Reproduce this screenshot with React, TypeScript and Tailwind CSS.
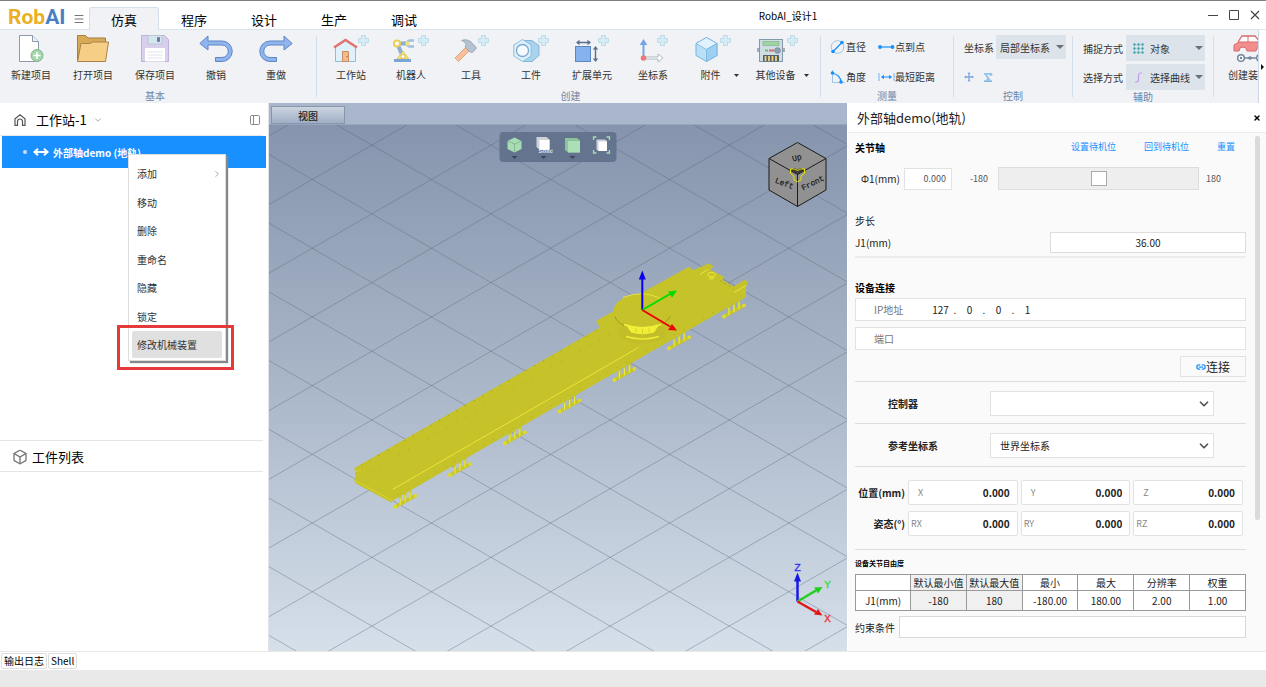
import { useState, type ReactNode } from 'react';
import { Box, ChevronDown, ChevronRight, Link2, Menu, PanelLeft, X } from 'lucide-react';

const tabs = ['仿真', '程序', '设计', '生产', '调试'];

const menuItems = ['添加', '移动', '删除', '重命名', '隐藏', '锁定', '修改机械装置'];

/* ---------- ribbon icons ---------- */

function Plus({ x }: { x: number }) {
  return (
    <path
      transform={`translate(${x} 0)`}
      d="M3.5 .5h4v3h3v4h-3v3h-4v-3h-3v-4h3z"
      fill="#d3ecf6"
      stroke="#b4d5e6"
      strokeWidth=".8"
    />
  );
}

function NewIcon() {
  return (
    <svg viewBox="0 0 26 28" className="w-[26px] h-7">
      <path d="M1.5 .5h13l6 6v20h-19z" fill="#fff" stroke="#8d9bab" />
      <path d="M14.5 .5v6h6" fill="#eef2f7" stroke="#8d9bab" />
      <circle cx="19" cy="20.5" r="6" fill="#a5d6ab" stroke="#7fb98a" />
      <path d="M19 17v7M15.5 20.5h7" stroke="#fff" strokeWidth="1.6" />
    </svg>
  );
}

function OpenIcon() {
  return (
    <svg viewBox="0 0 34 28" className="w-[34px] h-7">
      <path d="M1.5 26.5v-26h8l2.5 2.5h17.5v8" fill="#d8a957" stroke="#a47d3f" />
      <path d="M1.500 26.5l3.500-18h9l2.500-1.500h16l-3 19.500z" fill="#f6ce85" stroke="#a8824a" />
    </svg>
  );
}

function SaveIcon() {
  return (
    <svg viewBox="0 0 28 28" className="w-7 h-7">
      <path d="M.5 .5h23l4 4v22h-27z" fill="#d9cfec" stroke="#bfb2da" />
      <path d="M7 .5h14v8.5h-14z" fill="#d5e5ee" stroke="#b3c4d4" strokeWidth=".8" />
      <rect x="16" y="2" width="3" height="5" rx="1" fill="#6c7f9a" />
      <path d="M4 13h20v13.5h-20z" fill="#fff" />
      <path d="M6.5 17h15M6.5 20h15M6.5 23h15" stroke="#dfe3ec" />
    </svg>
  );
}

function UndoIcon({ flip }: { flip?: boolean }) {
  return (
    <svg viewBox="0 0 34 28" className={`w-[34px] h-7 ${flip ? '-scale-x-100' : ''}`}>
      <path
        d="M.8 8.500L9 1v5h14a10 10 0 0 1 0 20.5h-6.5v-4h6.5a6 6 0 0 0 0-12.5h-14v5z"
        fill="#90b5ee"
        stroke="#5f86c4"
      />
    </svg>
  );
}

function StationIcon() {
  return (
    <svg viewBox="0 0 36 28" className="w-9 h-7">
      <path d="M2.5 12L12.5 5l10 7v14.5h-20z" fill="#dff2fb" stroke="#8fbcd8" />
      <path d="M1 12.5L12.5 5 24 12.5" fill="none" stroke="#e0736f" strokeWidth="2.5" />
      <path d="M9.5 16.5h6v10h-6z" fill="#f6ba8c" stroke="#c98c5e" />
      <circle cx="14" cy="21.5" r=".7" fill="#9b6135" />
      <Plus x={25} />
    </svg>
  );
}

function RobotIcon() {
  return (
    <svg viewBox="0 0 36 28" className="w-9 h-7">
      <path d="M4 8l6 14" stroke="#8aaed4" strokeWidth="4" />
      <path d="M5 8.5h10" stroke="#8aaed4" strokeWidth="4" />
      <path d="M21 5.5h-4a3 3 0 0 0 0 6h4" fill="none" stroke="#9cc0e3" strokeWidth="2.5" />
      <circle cx="4" cy="8.5" r="3" fill="#fff" stroke="#e8cf57" strokeWidth="2" />
      <circle cx="14.5" cy="8.5" r="2.2" fill="#f4df73" />
      <path d="M4 24l6-8 6 8z" fill="#f7e37c" stroke="#d9c050" strokeWidth=".8" />
      <circle cx="10" cy="21.5" r="2" fill="#fff" stroke="#d9c050" />
      <rect x="1" y="24" width="17" height="3" fill="#7ba5d3" />
      <Plus x={25} />
    </svg>
  );
}

function HammerIcon() {
  return (
    <svg viewBox="0 0 36 28" className="w-9 h-7">
      <path d="M12.5 12.500l3.500 3.500-10.500 10.500-3.500-3.500z" fill="#f8c09a" stroke="#d99a71" strokeWidth=".8" />
      <path d="M8.5 5.500c4-1.500 8-.5 10.500 2.500l2 2 2.500 3-4 4.500-2.500-.5-5-5 1-2c0-2-2-3.500-4.500-4.500z" fill="#b5c3d0" stroke="#8f9fae" strokeWidth=".8" />
      <Plus x={25} />
    </svg>
  );
}

function NutIcon() {
  return (
    <svg viewBox="0 0 36 28" className="w-9 h-7">
      <path d="M10 5.5h9l7 5v10l-7 6h-9z" fill="#a9d2ee" stroke="#85b7d9" />
      <path d="M9.5 4.5L18 10v11l-8.5 5.500L.8 21V10z" fill="#dcf0fb" stroke="#8fc0de" />
      <circle cx="9.5" cy="15.5" r="6" fill="#f4fafd" stroke="#7ba9d0" strokeWidth="1.3" />
      <Plus x={25} />
    </svg>
  );
}

function ExtendIcon() {
  return (
    <svg viewBox="0 0 36 28" className="w-9 h-7">
      <rect x="1.5" y="11.5" width="15" height="15" fill="#86b2ef" stroke="#5d87c0" />
      <path d="M4 7.5h11M21.5 13v12" stroke="#5a6f8f" strokeWidth="1.4" />
      <path d="M5.5 4.8L2 7.500l3.500 2.700zM13.5 4.800L17 7.500l-3.500 2.700zM18.8 14.500L21.5 11l2.700 3.500zM18.8 23.500l2.700 3.500 2.700-3.500z" fill="#5a6f8f" />
      <Plus x={24} />
    </svg>
  );
}

function AxesIcon() {
  return (
    <svg viewBox="0 0 36 28" className="w-9 h-7">
      <path d="M7.5 9h2v13h-2zM8.5 4l3.8 6H4.700z" fill="#76a4e4" />
      <path d="M9 22h14v-3l5 4-5 4v-3H9z" fill="#fff" stroke="#9aa9b9" strokeWidth=".8" />
      <circle cx="8.5" cy="23" r="2.8" fill="#ef7676" />
      <Plus x={22} />
    </svg>
  );
}

function AttachIcon() {
  return (
    <svg viewBox="0 0 36 28" className="w-9 h-7">
      <path d="M11.5 2.500L22 8.500v12l-10.500 6-10.500-6v-12z" fill="#b9e0f8" stroke="#78b3da" />
      <path d="M11.5 2.500L22 8.500l-10.500 6L1 8.500z" fill="#dff2fd" stroke="#78b3da" strokeWidth=".8" />
      <path d="M11.5 14.500L22 8.500v12l-10.500 6z" fill="#9bd0f4" stroke="#78b3da" strokeWidth=".8" />
      <Plus x={25} />
    </svg>
  );
}

function DeviceIcon() {
  return (
    <svg viewBox="0 0 42 28" className="w-[42px] h-7">
      <rect x="2.5" y="4.5" width="23" height="22" fill="#cfdde5" stroke="#8398a8" />
      <path d="M1 13v4M27 13v4" stroke="#8398a8" strokeWidth="1.5" />
      <rect x="6" y="6.5" width="16" height="4" fill="#9fd3a4" stroke="#79b182" strokeWidth=".6" />
      <path d="M8 15.5h3" stroke="#6fbf78" strokeWidth="2" />
      <path d="M12 15.5h5" stroke="#dd6a67" strokeWidth="2" />
      <circle cx="20.5" cy="15.5" r="2.8" fill="#8d9fb3" stroke="#6f8397" strokeWidth=".8" />
      <rect x="6" y="20" width="16" height="6.5" fill="#55616f" />
      <path d="M8.5 21v5M12 21v5M15.5 21v5M19 21v5" stroke="#f0d47c" strokeWidth="1.8" />
      <Plus x={30} />
    </svg>
  );
}

function CarIcon() {
  return (
    <svg viewBox="0 0 36 28" className="w-9 h-7 shrink-0">
      <path d="M5 7L9 1h13l5 6" fill="#fff" stroke="#d76a6c" strokeWidth="1.3" />
      <path d="M15 1v7" stroke="#d76a6c" />
      <path d="M1 16V10l5-3h21l7 3v6h-3a4 4 0 0 0-8 0h-9a4 4 0 0 0-8 0z" fill="#f48e8e" stroke="#d76a6c" />
      <path d="M7 23h19" stroke="#73859a" strokeWidth="1.5" />
      <circle cx="8" cy="23" r="3.3" fill="#fff" stroke="#73859a" strokeWidth="1.5" />
      <circle cx="8" cy="23" r="1.2" fill="#73859a" />
      <circle cx="17" cy="23" r="1.8" fill="#73859a" />
      <circle cx="27" cy="23" r="3.3" fill="#fff" stroke="#73859a" strokeWidth="1.5" />
    </svg>
  );
}

function DiameterIcon() {
  return (
    <svg viewBox="0 0 16 14" className="w-4 h-3.5">
      <circle cx="7.5" cy="7" r="6.3" fill="none" stroke="#9fc3e6" />
      <path d="M3 11.5L12 2.5" stroke="#1890ff" strokeWidth="1.3" />
      <circle cx="3" cy="11.5" r="1.8" fill="#1890ff" />
      <circle cx="12" cy="2.5" r="1.8" fill="#1890ff" />
    </svg>
  );
}

function AngleIcon() {
  return (
    <svg viewBox="0 0 16 14" className="w-4 h-3.5">
      <path d="M2.5 0v12.500H15" fill="none" stroke="#9fc3e6" />
      <path d="M3 3.500a9 9 0 0 1 8 8.500" fill="none" stroke="#1890ff" strokeWidth="1.2" />
      <circle cx="2.5" cy="3" r="1.8" fill="#1890ff" />
      <circle cx="11" cy="12" r="1.8" fill="#1890ff" />
    </svg>
  );
}

function PointIcon() {
  return (
    <svg viewBox="0 0 17 10" className="w-[17px] h-2.5">
      <path d="M2 5h13" stroke="#1890ff" strokeWidth="1.2" />
      <circle cx="2" cy="5" r="1.9" fill="#1890ff" />
      <circle cx="14.5" cy="5" r="1.9" fill="#1890ff" />
    </svg>
  );
}

function DistanceIcon() {
  return (
    <svg viewBox="0 0 17 10" className="w-[17px] h-2.5">
      <path d="M1 1v8M16 1v8" stroke="#6fb2f5" />
      <path d="M4 5h9" stroke="#1890ff" />
      <path d="M5.5 3.5L3.5 5l2 1.500zM11.5 3.500l2 1.500-2 1.500z" fill="#1890ff" stroke="#1890ff" />
    </svg>
  );
}

/* ---------- ribbon parts ---------- */

function ToolButton({ icon, label, wide }: { icon: ReactNode; label: string; wide?: boolean }) {
  return (
    <button className={`flex flex-col items-center ${wide ? 'w-[62px]' : 'w-[60px]'}`}>
      {icon}
      <span className="mt-1 leading-4">{label}</span>
    </button>
  );
}

function DropButton({ icon, label, wide }: { icon: ReactNode; label: string; wide?: boolean }) {
  return (
    <button className={`flex flex-col items-center ${wide ? 'w-[70px]' : 'w-[60px]'}`}>
      {icon}
      <span className="mt-1 leading-4 w-full flex items-center">
        <span className="flex-1 pl-1 text-center">{label}</span>
        <svg viewBox="0 0 5 3" className="w-[5px] h-[3px] mr-1"><path d="M0 0h5L2.500 3z" fill="#333" /></svg>
      </span>
    </button>
  );
}

function Group({ title, className, children }: { title: string; className?: string; children: ReactNode }) {
  return (
    <div className={`flex flex-col pt-[5px] ${className ?? ''}`}>
      <div className="flex h-[55px]">{children}</div>
      <div className="text-center text-[#7085a5] leading-[14px]">{title}</div>
    </div>
  );
}

const Divider = () => <div className="w-px my-1.5 bg-[#d3dfec] shrink-0" />;

function RibbonSelect({ label, value, icon, className }: { label: string; value: string; icon?: ReactNode; className: string }) {
  return (
    <label className="flex items-center justify-between">
      <span>{label}</span>
      <span className={`relative flex items-center bg-[#dce3ea] ${className}`}>
        {icon}
        <select className={`appearance-none w-full h-full outline-none ${icon ? 'pl-6' : 'pl-1'}`}>
          <option>{value}</option>
        </select>
        <svg viewBox="0 0 8 4" className="absolute right-0.5 w-2 h-1 pointer-events-none"><path d="M0 0h8L4 4z" fill="#6b7075" /></svg>
      </span>
    </label>
  );
}

function Ribbon() {
  return (
    <div className="flex h-[74px] bg-[#f0f2f6] border-t border-[#dae4ee] text-[10px] text-[#333] shrink-0">
      <div className="flex flex-1 min-w-0 overflow-hidden border-r border-[#c9d8e6]">
        <Group title="基本" className="w-[316px] pr-1.5 shrink-0">
          <ToolButton icon={<NewIcon />} label="新建项目" wide />
          <ToolButton icon={<OpenIcon />} label="打开项目" wide />
          <ToolButton icon={<SaveIcon />} label="保存项目" wide />
          <ToolButton icon={<UndoIcon />} label="撤销" />
          <ToolButton icon={<UndoIcon flip />} label="重做" />
        </Group>
        <Divider />
        <Group title="创建" className="w-[503px] pl-1 shrink-0">
          <ToolButton icon={<StationIcon />} label="工作站" />
          <ToolButton icon={<RobotIcon />} label="机器人" />
          <ToolButton icon={<HammerIcon />} label="工具" />
          <ToolButton icon={<NutIcon />} label="工件" />
          <ToolButton icon={<ExtendIcon />} label="扩展单元" wide />
          <ToolButton icon={<AxesIcon />} label="坐标系" />
          <DropButton icon={<AttachIcon />} label="附件" />
          <DropButton icon={<DeviceIcon />} label="其他设备" wide />
        </Group>
        <Divider />
        <Group title="测量" className="w-[132px] shrink-0">
          <div className="grid grid-cols-[48px_1fr] content-between h-[50px] pt-1 pl-[9px] w-full">
            <button className="flex items-center leading-4"><DiameterIcon />直径</button>
            <button className="flex items-center leading-4"><PointIcon />点到点</button>
            <button className="flex items-center leading-4"><AngleIcon />角度</button>
            <button className="flex items-center leading-4"><DistanceIcon />最短距离</button>
          </div>
        </Group>
        <Divider />
        <Group title="控制" className="w-[118px] shrink-0">
          <div className="w-full pl-2.5 pr-1.5">
            <RibbonSelect label="坐标系" value="局部坐标系" className="w-[70px] h-6" />
            <div className="flex gap-[9px] mt-[13px]">
              <button aria-label="移动">
                <svg viewBox="0 0 10 10" className="w-2.5 h-2.5">
                  <path d="M5 1v8M1 5h8" stroke="#7ea6e0" strokeWidth="1.3" />
                  <path d="M5 0l1.500 2h-3zM5 10l1.500-2h-3zM0 5l2-1.500v3zM10 5L8 3.500v3z" fill="#7ea6e0" />
                </svg>
              </button>
              <button aria-label="机器人">
                <svg viewBox="0 0 10 10" className="w-2.5 h-2.5">
                  <path d="M1 1.800h8M2.500 2l3 5" stroke="#94c4ea" strokeWidth="1.8" />
                  <path d="M2.500 8.500L5.500 5 8 8.500z" fill="#94c4ea" />
                  <path d="M1 9.200h8" stroke="#7fb2e0" strokeWidth="1.500" />
                  <circle cx="8" cy="2.500" r="1.500" fill="#94c4ea" />
                </svg>
              </button>
            </div>
          </div>
        </Group>
        <Divider />
        <Group title="辅助" className="w-[140px] shrink-0">
          <div className="w-full px-2 pl-2.5 flex flex-col gap-[3px]">
            <RibbonSelect
              label="捕捉方式"
              value="对象"
              className="w-[79px] h-[26px]"
              icon={
                <svg viewBox="0 0 11 11" className="absolute left-[7px] w-[11px] h-[11px]">
                  <path d="M1.5 0v11M5.5 0v11M9.5 0v11M0 1.500h11M0 5.500h11M0 9.500h11" stroke="#8cc9cd" strokeWidth=".6" />
                  <path d="M1.5 .5v2M5.5 .5v2M9.5 .5v2M1.5 4.500v2M5.5 4.500v2M9.5 4.500v2M1.5 8.500v2M5.5 8.500v2M9.5 8.500v2" stroke="#3a9ba5" strokeWidth="2" />
                </svg>
              }
            />
            <RibbonSelect
              label="选择方式"
              value="选择曲线"
              className="w-[79px] h-[26px]"
              icon={
                <svg viewBox="0 0 11 11" className="absolute left-[7px] w-[11px] h-[11px]">
                  <path d="M2 10h1.500c2 0 2-1.500 2-4.500s0-4.500 2-4.500H9" fill="none" stroke="#c79be6" strokeWidth="1.2" />
                </svg>
              }
            />
          </div>
        </Group>
        <Divider />
        <Group title="" className="flex-1 min-w-0 pl-3.5">
          <button className="flex flex-col items-start">
            <span className="pl-[5px]"><CarIcon /></span>
            <span className="mt-1 leading-4 whitespace-nowrap">创建装</span>
          </button>
        </Group>
      </div>
      <button aria-label="更多" className="w-[7px] bg-white flex items-center justify-center">
        <svg viewBox="0 0 3 6" className="w-[3px] h-1.5"><path d="M0 0l3 3-3 3z" fill="#111" /></svg>
      </button>
    </div>
  );
}

function TitleBar({ active, setActive }: { active: string; setActive: (t: string) => void }) {
  return (
    <header className="flex h-[29px] items-stretch bg-white border-t border-[#808080] shrink-0">
      <div className="flex items-center w-[66px] pl-2 pt-1 text-[21px] leading-none font-bold font-[Roboto,sans-serif]">
        <span className="text-[#eaaf22]">Rob</span>
        <span className="text-[#4a7fc4]">AI</span>
      </div>
      <button aria-label="菜单" className="w-[23px] flex items-center pl-[7px] pt-2">
        <Menu className="w-3 h-3 text-[#777]" />
      </button>
      <nav className="flex pt-1.5">
        {tabs.map((t) => (
          <button
            key={t}
            onClick={() => setActive(t)}
            className={`w-[70px] text-[13px] leading-6 border border-b-0 rounded-t-[3px] ${
              t === active ? 'bg-[#f0f2f6] border-[#d5e0ec] -mb-px relative' : 'border-transparent'
            }`}
          >
            {t}
          </button>
        ))}
      </nav>
      <h1 className="flex-1 text-center text-[10px] leading-[29px]">RobAI_设计1</h1>
      <div className="w-[129px] flex items-center justify-end gap-2.5 pr-1.5 text-[#444]">
        <button aria-label="最小化"><svg viewBox="0 0 10 10" className="w-2.5 h-2.5"><path d="M0 5.500h10" stroke="currentColor" /></svg></button>
        <button aria-label="最大化"><svg viewBox="0 0 12 10" className="w-3 h-2.5"><path d="M1.500 .5h9v9h-9z" fill="none" stroke="currentColor" /></svg></button>
        <button aria-label="关闭"><svg viewBox="0 0 10 10" className="w-2.5 h-2.5"><path d="M1 1l8 8M9 1L1 9" stroke="currentColor" strokeWidth="1.2" /></svg></button>
      </div>
    </header>
  );
}

/* ---------- left panel ---------- */

function ContextMenu() {
  return (
    <div className="absolute z-20 left-[126px] top-[18px] w-[98px] h-[207px] pt-[5px] pb-0.5 px-[3px] bg-white border border-[#ddd] shadow-[2px_2px_1px_#888] text-[10px] font-normal text-[#333]">
      <ul className="h-full flex flex-col justify-between">
        {menuItems.map((m, i) => (
          <li key={m}>
            <button
              className={`w-full h-[27px] pl-[5px] rounded-[2px] flex items-center justify-between ${
                i === menuItems.length - 1 ? 'bg-[#e0e0e0]' : ''
              }`}
            >
              {m}
              {i === 0 && <ChevronRight className="w-2.5 h-2.5 text-[#999]" />}
            </button>
          </li>
        ))}
      </ul>
      <div className="absolute -left-3 -right-[9px] -bottom-2.5 h-[45px] border-3 border-[#e53a3c] pointer-events-none" />
    </div>
  );
}

function LeftPanel() {
  return (
    <aside className="w-[269px] shrink-0 flex flex-col bg-white pr-[5px] border-r border-[#dfe3ea]">
      <div className="h-[33px] flex items-center pl-3.5 pr-0.5 pt-0.5 text-[13px] border-b border-[#e6e8ec] shrink-0">
        <svg viewBox="0 0 12 12" className="w-3 h-3">
          <path d="M1 11.400V4.800L6 .8l5 4v6.600H8.500V7.500a2.500 2.500 0 0 0-5 0v3.900z" fill="none" stroke="#555" strokeWidth="1.2" />
        </svg>
        <span className="ml-2.5">工作站-1</span>
        <ChevronDown className="ml-1.5 w-2.5 h-2.5 text-[#999]" strokeWidth={2} />
        <button aria-label="折叠" className="ml-auto"><PanelLeft className="w-3 h-3 text-[#888]" /></button>
      </div>
      <div className="flex-1 min-h-0">
        <div className="relative ml-0.5 -mr-[3px] h-8 bg-[#1890ff] text-white text-[10px] font-bold flex items-center">
          <span className="ml-[21px] w-1 h-1 rounded-full bg-[#c9dff5]" />
          <svg viewBox="0 0 16 8" className="w-4 h-2 ml-1.5 mr-1">
            <path d="M2 4h12M5 .8L1.500 4 5 7.200M11 .8L14.500 4 11 7.200" fill="none" stroke="#fff" strokeWidth="2" />
          </svg>
          外部轴demo (地轨)
          <ContextMenu />
        </div>
      </div>
      <div className="h-8 flex items-center pl-3 pt-px text-[13px] border-y border-[#e3e5e8] shrink-0">
        <Box className="w-4 h-4 text-[#777] mr-1" />
        工件列表
      </div>
      <div className="h-[179px] shrink-0" />
    </aside>
  );
}

/* ---------- 3D viewport ---------- */

const feet = [0, 1, 2, 3, 4, 5, 6];

function Scene() {
  // floor grid: two families of 30 degree lines crossing at x = 312.3
  const lines = [];
  for (let i = -7; i <= 12; i++) {
    const y = 180 + i * 68.7;
    lines.push(<path key={i} d={`M-287.7 ${y - 346}L912.300 ${y + 346}M-287.7 ${y + 346}L912.300 ${y - 346}`} />);
  }
  return (
    <svg viewBox="269 125 578 527" preserveAspectRatio="xMidYMid slice" className="block w-full h-full">
      <defs>
        <linearGradient id="sky" x1="0" y1="0" x2="0" y2="1">
          <stop offset="0" stopColor="#8694ad" />
          <stop offset=".5" stopColor="#aab7c9" />
          <stop offset="1" stopColor="#d6dfea" />
        </linearGradient>
      </defs>
      <rect x="269" y="125" width="578" height="527" fill="url(#sky)" />
      <g stroke="#5a6679" strokeOpacity=".5" strokeWidth=".8" fill="none">{lines}</g>

      {/* rail supports */}
      {feet.map((i) => (
        <g key={i} transform={`translate(${724 - i * 54.8} ${316.5 + i * 31.7})`}>
          <path d="M0 .5L20-10.5" stroke="#c9c62a" strokeWidth="3.4" strokeLinecap="round" />
          <path d="M5-2v-11M10-5v-11M15-8v-11" stroke="#c9c62a" strokeWidth="2.4" />
          <path d="M5-1v-7M10-4v-7M15-7v-7" stroke="#f2f03a" strokeWidth="1" />
          <circle cx="0" cy=".5" r="2" fill="#dedb2e" />
          <circle cx="20" cy="-10.5" r="1.8" fill="#dedb2e" />
        </g>
      ))}

      {/* rail body and carriage */}
      <path
        d="M354.500 468.500L600 328l-4-6.500 18-10 33-21L688.500 267.500l5 3 15-6.500 5 2.500-3 4 14 7-2 3 11 6.500 12-7 2 3-1.500 5v9.500L392 501.500v2L356 484l-2-3.500 1.500-3z"
        fill="#c5c22a"
      />
      <path d="M355 472l6-1.500M355 481l37 20" stroke="#d9d62e" fill="none" />
      <path d="M392.500 490L638.500 348M734 293l12-7M700 275l8-5" stroke="#e9e735" fill="none" />
      <path d="M361 466L600 329" stroke="#8b8820" strokeWidth=".8" strokeDasharray="1 9" fill="none" />
      <path d="M370 472L610 334M398 495L742 296" stroke="#a5a225" strokeWidth=".8" strokeDasharray="1 10" fill="none" />
      <path d="M720 281l14 8" stroke="#a9a624" strokeDasharray="2 3" fill="none" />
      <ellipse cx="711.5" cy="275" rx="4" ry="2" fill="#c5c22a" stroke="#efed3a" />
      <path d="M709 277v2.500q2.500 1 5 0V277z" fill="#dcd92f" />

      {/* turntable */}
      <ellipse cx="642.5" cy="333" rx="24" ry="11" fill="#c1be29" />
      <path d="M626 337q16.500 5 33 0" fill="none" stroke="#eeec3a" strokeWidth="1.5" />
      <path d="M625 324h35l-6 9q-12 3.500-23 0z" fill="#f1ef35" />
      <path d="M636 328v5M642.500 329v8M649 328v5" stroke="#d5d22e" />
      <ellipse cx="642.5" cy="311.5" rx="29" ry="17" fill="#c5c22a" />
      <path d="M624 325q18 6.500 37 0" fill="none" stroke="#f2f03a" strokeWidth="1.6" />
      <path d="M623 298q19-8 38 1" fill="none" stroke="#e7e535" />
      <path d="M615 317q2 6 9 9M670 317q-2 4-5 6" fill="none" stroke="#9d9a24" />

      {/* model axes */}
      <g strokeWidth="2">
        <path d="M642.300 310.500V278" stroke="#0a00f0" />
        <path d="M642.300 271l3.500 9h-7z" fill="#0a00f0" />
        <path d="M642.300 310.500L670 294.500" stroke="#00dc00" />
        <path d="M677 291l-5 7-4-6z" fill="#00dc00" />
        <path d="M642.300 310.500L670 327" stroke="#f00000" />
        <path d="M677 331l-9-.5 4-6z" fill="#f00000" />
      </g>

      {/* view cube */}
      <path d="M797.500 143l28.500 16v31.500L797.500 207 769 190.500V159z" fill="#919191" stroke="#1b1b1b" />
      <path d="M769 159l28.500 16 28.500-16M797.500 175v32" fill="none" stroke="#1b1b1b" />
      <path d="M797.500 174l-6-3.500 3-1.500 3 1.500 3-1.500 3 1.500zM797.500 174v6" fill="#444" stroke="#222" />
      <path d="M790.500 169.500h4.500l2.500 1.500 2.500-1.500h4.500v4.500l-3.500 2.500v4l-3.500 1.700-3.500-1.700v-4l-3.500-2.500z" fill="none" stroke="#e8e000" />
      <g fontFamily="Liberation Mono, monospace" fontSize="8" fill="#1a1a1a" stroke="#1a1a1a" strokeWidth=".2">
        <text transform="translate(774.500 183) rotate(20)">Left</text>
        <text transform="translate(803 191) rotate(-26)">Front</text>
        <text transform="translate(793 162) rotate(-16)">Up</text>
      </g>

      {/* world axes */}
      <g strokeWidth="2.5">
        <path d="M797.500 602V580" stroke="#1818e0" />
        <path d="M797.500 573l3.500 9h-7z" fill="#1818e0" />
        <path d="M797.500 602L816 591" stroke="#1fd01f" />
        <path d="M822.500 587.500l-4.500 6.500-4-6z" fill="#1fd01f" />
        <path d="M797.500 602L816 612.500" stroke="#e01818" />
        <path d="M822.500 616l-8.500-1 4-5.500z" fill="#e01818" />
      </g>
      <g fontFamily="Liberation Mono, monospace" fontSize="11" textAnchor="middle">
        <text x="797.5" y="571" fill="#3030f0" stroke="#3030f0" strokeWidth=".3">Z</text>
        <text x="827.5" y="588" fill="#30e030" stroke="#30e030" strokeWidth=".3">Y</text>
        <text x="827.5" y="622" fill="#f03030" stroke="#f03030" strokeWidth=".3">X</text>
      </g>
    </svg>
  );
}

function ViewButton({ label, caret = true, children }: { label: string; caret?: boolean; children: ReactNode }) {
  return (
    <button aria-label={label} className="w-[29px] flex flex-col items-center">
      <svg viewBox="0 0 18 18" className="w-[18px] h-[18px]">{children}</svg>
      <svg viewBox="0 0 6 3" className="w-1.5 h-[3px] mt-0.5">{caret && <path d="M0 0h6L3 3z" fill="#3b465a" />}</svg>
    </button>
  );
}

function Viewport() {
  return (
    <section className="flex-1 min-w-0 flex flex-col">
      <div className="h-[22px] bg-[#a9b6cb] pl-0.5 pt-[3px] shrink-0 border-b border-[#98a6bd]">
        <button className="block w-[74px] h-[18px] text-[10px] leading-[18px] font-medium text-[#222] border border-[#8896ad] bg-linear-to-b from-[#ccd5e0] to-[#a0afc5]">
          视图
        </button>
      </div>
      <div className="relative flex-1 min-h-0">
        <div className="absolute inset-0"><Scene /></div>
        <div className="absolute top-[7px] left-1/2 -translate-x-1/2 flex h-[30px] pt-1 pr-px bg-[#64738e] rounded-[4px]">
          <ViewButton label="视角">
            <path d="M9 1.500l7 3.500v8l-7 3.500-7-3.500V5z" fill="#a8dcb4" />
            <path d="M2 5l7 3 7-3M9 8v8" fill="none" stroke="#6ea683" strokeDasharray="1.5 1" />
          </ViewButton>
          <ViewButton label="显示方式">
            <path d="M2 1h10l3 2.500v10H5L2 11z" fill="#cfd3d8" />
            <path d="M5 4h10v10H5z" fill="#fff" />
            <text x="4" y="17" fontSize="6" fontWeight="bold" fill="#dfe6ec" fontFamily="Liberation Sans, sans-serif">Solid</text>
          </ViewButton>
          <ViewButton label="透明度">
            <path d="M1.500 2h12l3 2.500v12h-12l-3-2.500z" fill="#8cc39b" />
            <path d="M4.500 5h12v11.500h-12z" fill="#abdfb6" />
          </ViewButton>
          <ViewButton label="适应窗口" caret={false}>
            <path d="M1 4V1h3M14 1h3v3M17 14v3h-3M4 17H1v-3" fill="none" stroke="#a8dcb4" strokeWidth="1.5" />
            <path d="M4 3.500h8.500l2 1.500v10H6l-2-1.500z" fill="#cfd3d8" />
            <path d="M6 5.500h8.500v9.500H6z" fill="#fff" />
          </ViewButton>
        </div>
      </div>
    </section>
  );
}

/* ---------- right panel ---------- */

const links = [
  { label: '设置待机位', className: '' },
  { label: '回到待机位', className: 'ml-7' },
  { label: '重置', className: 'ml-7' },
];

const pose = [
  { title: '位置(mm)', axes: ['X', 'Y', 'Z'] },
  { title: '姿态(°)', axes: ['RX', 'RY', 'RZ'] },
];

const limits = [
  { head: '默认最小值', value: '-180', fixed: true },
  { head: '默认最大值', value: '180', fixed: true },
  { head: '最小', value: '-180.00' },
  { head: '最大', value: '180.00' },
  { head: '分辨率', value: '2.00' },
  { head: '权重', value: '1.00' },
];

function PanelSelect({ id, label, value }: { id: string; label: string; value: string }) {
  return (
    <div className="flex items-center h-[25px] pl-[33px]">
      <label htmlFor={id} className="w-[102px] font-bold">{label}</label>
      <div className="relative w-[224px] h-full flex items-center">
        <select id={id} className="appearance-none w-full h-full pl-[9px] bg-white border border-[#e2e2e2]">
          <option>{value}</option>
        </select>
        <ChevronDown className="absolute right-[3px] w-3.5 h-3.5 text-[#555] pointer-events-none" strokeWidth={3} />
      </div>
    </div>
  );
}

function RightPanel() {
  const [joint, setJoint] = useState(0);
  return (
    <aside className="w-[419px] shrink-0 flex flex-col bg-[#fafafa] border-l border-white text-[10px] text-[#222] overflow-hidden">
      <div className="h-[30px] flex items-center justify-between bg-white pl-[9px] pr-[5px] border-b border-[#ececec] shrink-0">
        <h2 className="text-[13px]">外部轴demo(地轨)</h2>
        <button aria-label="关闭面板"><X className="w-2 h-2 text-black" strokeWidth={4} /></button>
      </div>
      <div className="flex-1 min-h-0 flex justify-between pl-[7px] pr-1.5 overflow-hidden">
        <div className="w-[391px] pt-1">
          <div className="h-5 flex items-center">
            <h3 className="font-bold text-black flex-1">关节轴</h3>
            {links.map((l) => (
              <a key={l.label} href="#" className={`text-[9px] text-[#1890ff] ${l.className}`}>{l.label}</a>
            ))}
            <span className="w-[11px]" />
          </div>
          <div className="h-[23px] mt-2.5 flex items-center">
            <label htmlFor="joint" className="w-[49px] pl-1.5">Φ1(mm)</label>
            <input id="joint" className="w-12 h-[22px] pr-[5px] text-right text-[9px] bg-white border border-[#e2e2e2] text-[#555]" value={joint.toFixed(3)} readOnly />
            <span className="w-[46px] pr-2.5 text-right text-[9px] text-[#555]">-180</span>
            <input
              type="range"
              aria-label="Φ1"
              min={-180}
              max={180}
              value={joint}
              onChange={(e) => setJoint(Number(e.target.value))}
              className="appearance-none w-[201px] h-[23px] bg-[#eee] border border-[#ddd] [&::-webkit-slider-thumb]:appearance-none [&::-webkit-slider-thumb]:w-4 [&::-webkit-slider-thumb]:h-[15px] [&::-webkit-slider-thumb]:bg-white [&::-webkit-slider-thumb]:border [&::-webkit-slider-thumb]:border-[#aaa]"
            />
            <span className="ml-[7px] text-[9px] text-[#555]">180</span>
          </div>

          <h3 className="mt-6 leading-[14px]">步长</h3>
          <div className="mt-1 h-[21px] flex items-center justify-between">
            <label htmlFor="step">J1(mm)</label>
            <input id="step" defaultValue="36.00" className="w-[196px] h-full text-center bg-white border border-[#ddd]" />
          </div>
          <hr className="mt-[3px] border-t-2 border-[#ececec]" />

          <h3 className="mt-[23px] leading-[14px] font-bold text-black">设备连接</h3>
          <div className="mt-[3px] h-[23px] flex items-center bg-white border border-[#e2e2e2] pl-[18px]">
            <span className="w-[54px] text-[#777]">IP地址</span>
            {['127', '0', '0', '1'].map((n, i) => (
              <span key={i} className="flex items-center">
                <input aria-label={`IP ${i + 1}`} defaultValue={n} className="w-[25px] text-center" />
                <span className="w-1 text-center">{i < 3 ? '.' : ''}</span>
              </span>
            ))}
          </div>
          <label className="mt-1.5 h-[23px] flex items-center bg-white border border-[#e2e2e2] pl-[18px]">
            <span className="w-[54px] text-[#777]">端口</span>
            <input className="flex-1 outline-none" />
          </label>
          <button className="mt-1.5 ml-auto w-[66px] h-[21px] flex items-center justify-center border border-[#e2e2e2] text-[12px]">
            <Link2 className="w-2.5 h-2.5 text-[#1890ff]" strokeWidth={3} />
            连接
          </button>
          <hr className="mt-1 border-[#ddd]" />
          <div className="mt-[9px]"><PanelSelect id="controller" label="控制器" value="" /></div>
          <hr className="mt-[7px] border-[#ddd]" />
          <div className="mt-[9px]"><PanelSelect id="frame" label="参考坐标系" value="世界坐标系" /></div>
          <hr className="mt-2 border-[#ddd]" />

          <div className="mt-[13px] flex flex-col gap-1.5">
            {pose.map((row) => (
              <div key={row.title} className="h-[25px] flex items-center">
                <span className="w-[50px] mr-[3px] text-right font-bold whitespace-nowrap">{row.title}</span>
                <div className="w-[335px] h-full grid grid-cols-3 gap-[3px]">
                  {row.axes.map((a) => (
                    <label key={a} className="flex items-center bg-white border border-[#e2e2e2] rounded-[2px]">
                      <span className={`text-[9px] text-[#888] ${a.length > 1 ? 'pl-0.5' : 'pl-[9px]'}`}>{a}</span>
                      <input defaultValue="0.000" className="flex-1 min-w-0 text-right font-bold pr-[7px]" />
                    </label>
                  ))}
                </div>
              </div>
            ))}
          </div>
          <hr className="mt-[13px] border-[#ddd]" />

          <h3 className="mt-2 leading-[10px] text-[7px] font-bold text-black">设备关节自由度</h3>
          <table className="mt-1.5 w-full table-fixed border-collapse bg-white text-center">
            <thead>
              <tr className="h-4 leading-[14px]">
                <th className="w-[55px] border border-[#999]" />
                {limits.map((l) => (
                  <th key={l.head} className={`border border-[#999] font-normal whitespace-nowrap ${l.fixed ? 'bg-[#f0f0f0]' : ''}`}>{l.head}</th>
                ))}
              </tr>
            </thead>
            <tbody>
              <tr className="h-5 leading-[14px]">
                <td className="border border-[#999]">J1(mm)</td>
                {limits.map((l) => (
                  <td key={l.head} className={`border border-[#999] ${l.fixed ? 'bg-[#f0f0f0]' : ''}`}>{l.value}</td>
                ))}
              </tr>
            </tbody>
          </table>
          <label className="mt-[5px] h-[22px] flex items-center">
            <span className="w-11">约束条件</span>
            <input className="flex-1 h-full bg-white border border-[#d8d8d8]" />
          </label>
        </div>
        <div className="w-[5px] h-[384px] mt-[3px] bg-[#dadada] rounded-[2px]" />
      </div>
    </aside>
  );
}

export default function App() {
  const [active, setActive] = useState('仿真');
  return (
    <div className="h-screen flex flex-col overflow-hidden bg-white text-black font-['Noto_Sans_CJK_SC',sans-serif]">
      <TitleBar active={active} setActive={setActive} />
      <Ribbon />
      <main className="flex-1 min-h-0 flex">
        <LeftPanel />
        <Viewport />
        <RightPanel />
      </main>
      <footer className="shrink-0">
        <div className="h-[19px] flex items-start gap-px pl-px pt-px border-t border-[#e8e8e8] text-[10px] leading-[14px]">
          <button className="px-0.5 border border-[#ddd] rounded-[2px]">输出日志</button>
          <button className="px-0.5 border border-[#ddd] rounded-[2px]">Shell</button>
        </div>
        <div className="h-[17px] bg-[#e9e9e9]" />
      </footer>
    </div>
  );
}
